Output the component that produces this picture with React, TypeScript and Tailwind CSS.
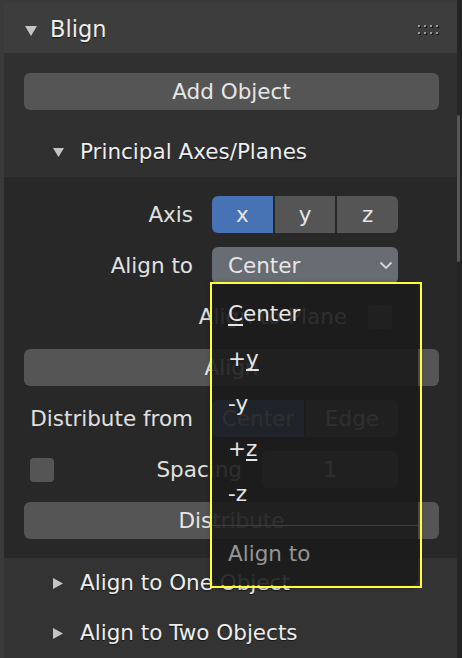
import React from "react";

const TriDown = ({ w, h }: { w: number; h: number }) => (
  <svg width={w} height={h} viewBox={`0 0 ${w} ${h}`} className="shrink-0">
    <polygon points={`0,0 ${w},0 ${w / 2},${h}`} fill="#c4c4c4" />
  </svg>
);

const TriRight = ({ w, h }: { w: number; h: number }) => (
  <svg width={w} height={h} viewBox={`0 0 ${w} ${h}`} className="shrink-0">
    <polygon points={`0,0 ${w},${h / 2} 0,${h}`} fill="#c4c4c4" />
  </svg>
);

const Grip = () => (
  <svg width="22" height="11" viewBox="0 0 22 11" className="shrink-0">
    {[0, 6, 12, 18].map((x) =>
      [0, 7].map((y) => (
        <g key={`${x}-${y}`}>
          <rect x={x + 1} y={y + 1} width="2" height="2" fill="#111" />
          <rect x={x} y={y} width="2" height="2" fill="#9a9a9a" />
        </g>
      ))
    )}
  </svg>
);

const Button = ({ label }: { label: string }) => (
  <div className="ml-[20px] mr-[18px] h-[37px] rounded-[6px] bg-[#555555] flex items-center justify-center text-[#e6e6e6]">
    {label}
  </div>
);

const ul =
  "underline decoration-[2px] underline-offset-[3px] [text-decoration-skip-ink:none]";

export default function App() {
  return (
    <div className="relative w-[462px] h-[658px] overflow-hidden bg-[#3a3a3a] font-['DejaVu_Sans',sans-serif] text-[21.5px] leading-none text-[#e6e6e6]">
      <div className="flex h-full">
        <div className="w-[4px] shrink-0" />
        <div className="w-[453px] shrink-0 flex flex-col pt-[3px]">
          {/* Header */}
          <div className="h-[50px] bg-[#3d3d3d] flex items-center">
            <div className="ml-[21px] mt-[5px]">
              <TriDown w={12} h={10} />
            </div>
            <span className="ml-[13px] mt-[3px] text-[22.5px] text-[#eeeeee] [text-shadow:0_1px_1px_rgba(0,0,0,0.6)]">
              Blign
            </span>
            <div className="ml-auto mr-[17px] mt-[4px]">
              <Grip />
            </div>
          </div>

          {/* Body */}
          <div className="bg-[#303030] pt-[20px] flex flex-col">
            <Button label="Add Object" />
            <div className="mt-[17px] h-[50px] flex items-center">
              <div className="ml-[49px]">
                <TriDown w={11} h={9} />
              </div>
              <span className="ml-[16px] text-[#eeeeee] [text-shadow:0_1px_1px_rgba(0,0,0,0.6)]">
                Principal Axes/Planes
              </span>
            </div>

            {/* Subpanel content */}
            <div className="bg-[#282828] pt-[19px] pb-[19px] flex flex-col gap-[14px]">
              {/* Axis */}
              <div className="h-[37px] flex items-center">
                <div className="w-[189px] text-right text-[#e0e0e0]">Axis</div>
                <div className="ml-[19px] w-[186px] h-full flex gap-[2px]">
                  <div className="flex-1 rounded-l-[6px] bg-[#4772b3] flex items-center justify-center">x</div>
                  <div className="flex-1 bg-[#555555] flex items-center justify-center">y</div>
                  <div className="flex-1 rounded-r-[6px] bg-[#555555] flex items-center justify-center">z</div>
                </div>
              </div>

              {/* Align to */}
              <div className="h-[37px] flex items-center">
                <div className="w-[189px] text-right text-[#e0e0e0]">Align to</div>
                <div className="ml-[19px] w-[186px] h-full rounded-[6px] bg-[#686c73] flex items-center justify-between pl-[16px] pr-[5px]">
                  <span>Center</span>
                  <svg width="14" height="9" viewBox="0 0 14 9">
                    <polyline points="1.5,1.5 7,7 12.5,1.5" fill="none" stroke="#d6d6d6" strokeWidth="1.8" />
                  </svg>
                </div>
              </div>

              {/* Align to Plane */}
              <div className="h-[37px] flex items-center">
                <div className="w-[343px] text-right text-[#e0e0e0]">Align to Plane</div>
                <div className="ml-[21px] w-[24px] h-[24px] rounded-[4px] bg-[#555555]" />
              </div>

              <Button label="Align" />

              {/* Distribute from */}
              <div className="h-[37px] flex items-center">
                <div className="w-[189px] text-right text-[#e0e0e0]">Distribute from</div>
                <div className="ml-[19px] w-[186px] h-full flex gap-[2px]">
                  <div className="flex-1 rounded-l-[6px] bg-[#4772b3] flex items-center justify-center">Center</div>
                  <div className="flex-1 rounded-r-[6px] bg-[#555555] flex items-center justify-center">Edge</div>
                </div>
              </div>

              {/* Spacing */}
              <div className="h-[37px] flex items-center">
                <div className="ml-[26px] w-[24px] h-[24px] rounded-[4px] bg-[#555555]" />
                <div className="w-[188px] text-right text-[#e0e0e0]">Spacing</div>
                <div className="ml-[20px] w-[136px] h-full rounded-[6px] bg-[#555555] flex items-center justify-center">1</div>
              </div>

              <Button label="Distribute" />
            </div>
          </div>

          {/* Collapsed subpanels */}
          <div className="bg-[#333333] flex-1 flex flex-col">
            <div className="h-[50px] flex items-center">
              <div className="ml-[49px]">
                <TriRight w={10} h={11} />
              </div>
              <span className="ml-[17px] text-[#eeeeee] [text-shadow:0_1px_1px_rgba(0,0,0,0.6)]">
                Align to One Object
              </span>
            </div>
            <div className="h-[50px] flex items-center">
              <div className="ml-[49px]">
                <TriRight w={10} h={11} />
              </div>
              <span className="ml-[17px] text-[#eeeeee] [text-shadow:0_1px_1px_rgba(0,0,0,0.6)]">
                Align to Two Objects
              </span>
            </div>
          </div>
        </div>
        <div className="relative w-[5px] shrink-0 bg-[#242424]">
          <div className="absolute left-0 top-[115px] w-[3px] h-[147px] rounded-[2px] bg-[#575757]" />
        </div>
      </div>

      {/* Dropdown menu */}
      <div className="absolute left-[212px] top-[283px] w-[206px] h-[302px] rounded-b-[6px] bg-[#1b1b1b]/[0.9] flex flex-col pt-[8px] shadow-[0_2px_6px_rgba(0,0,0,0.4)]">
        <div className="h-[45px] flex items-center pl-[16px]">
          <span>
            <span className={ul}>C</span>enter
          </span>
        </div>
        <div className="h-[45px] flex items-center pl-[16px]">
          <span>
            +<span className={ul}>y</span>
          </span>
        </div>
        <div className="h-[45px] flex items-center pl-[16px]">-y</div>
        <div className="h-[45px] flex items-center pl-[16px]">
          <span>
            +<span className={ul}>z</span>
          </span>
        </div>
        <div className="h-[45px] flex items-center pl-[16px]">-z</div>
        <div className="mt-[9px] h-[1px] bg-[#3e3e3e]" />
        <div className="mt-[5px] h-[45px] flex items-center pl-[16px] text-[#959595]">Align to</div>
      </div>
      <div className="pointer-events-none absolute left-[210px] top-[282px] w-[212px] h-[306px] border-2 border-[#ffff3c]" />
    </div>
  );
}
